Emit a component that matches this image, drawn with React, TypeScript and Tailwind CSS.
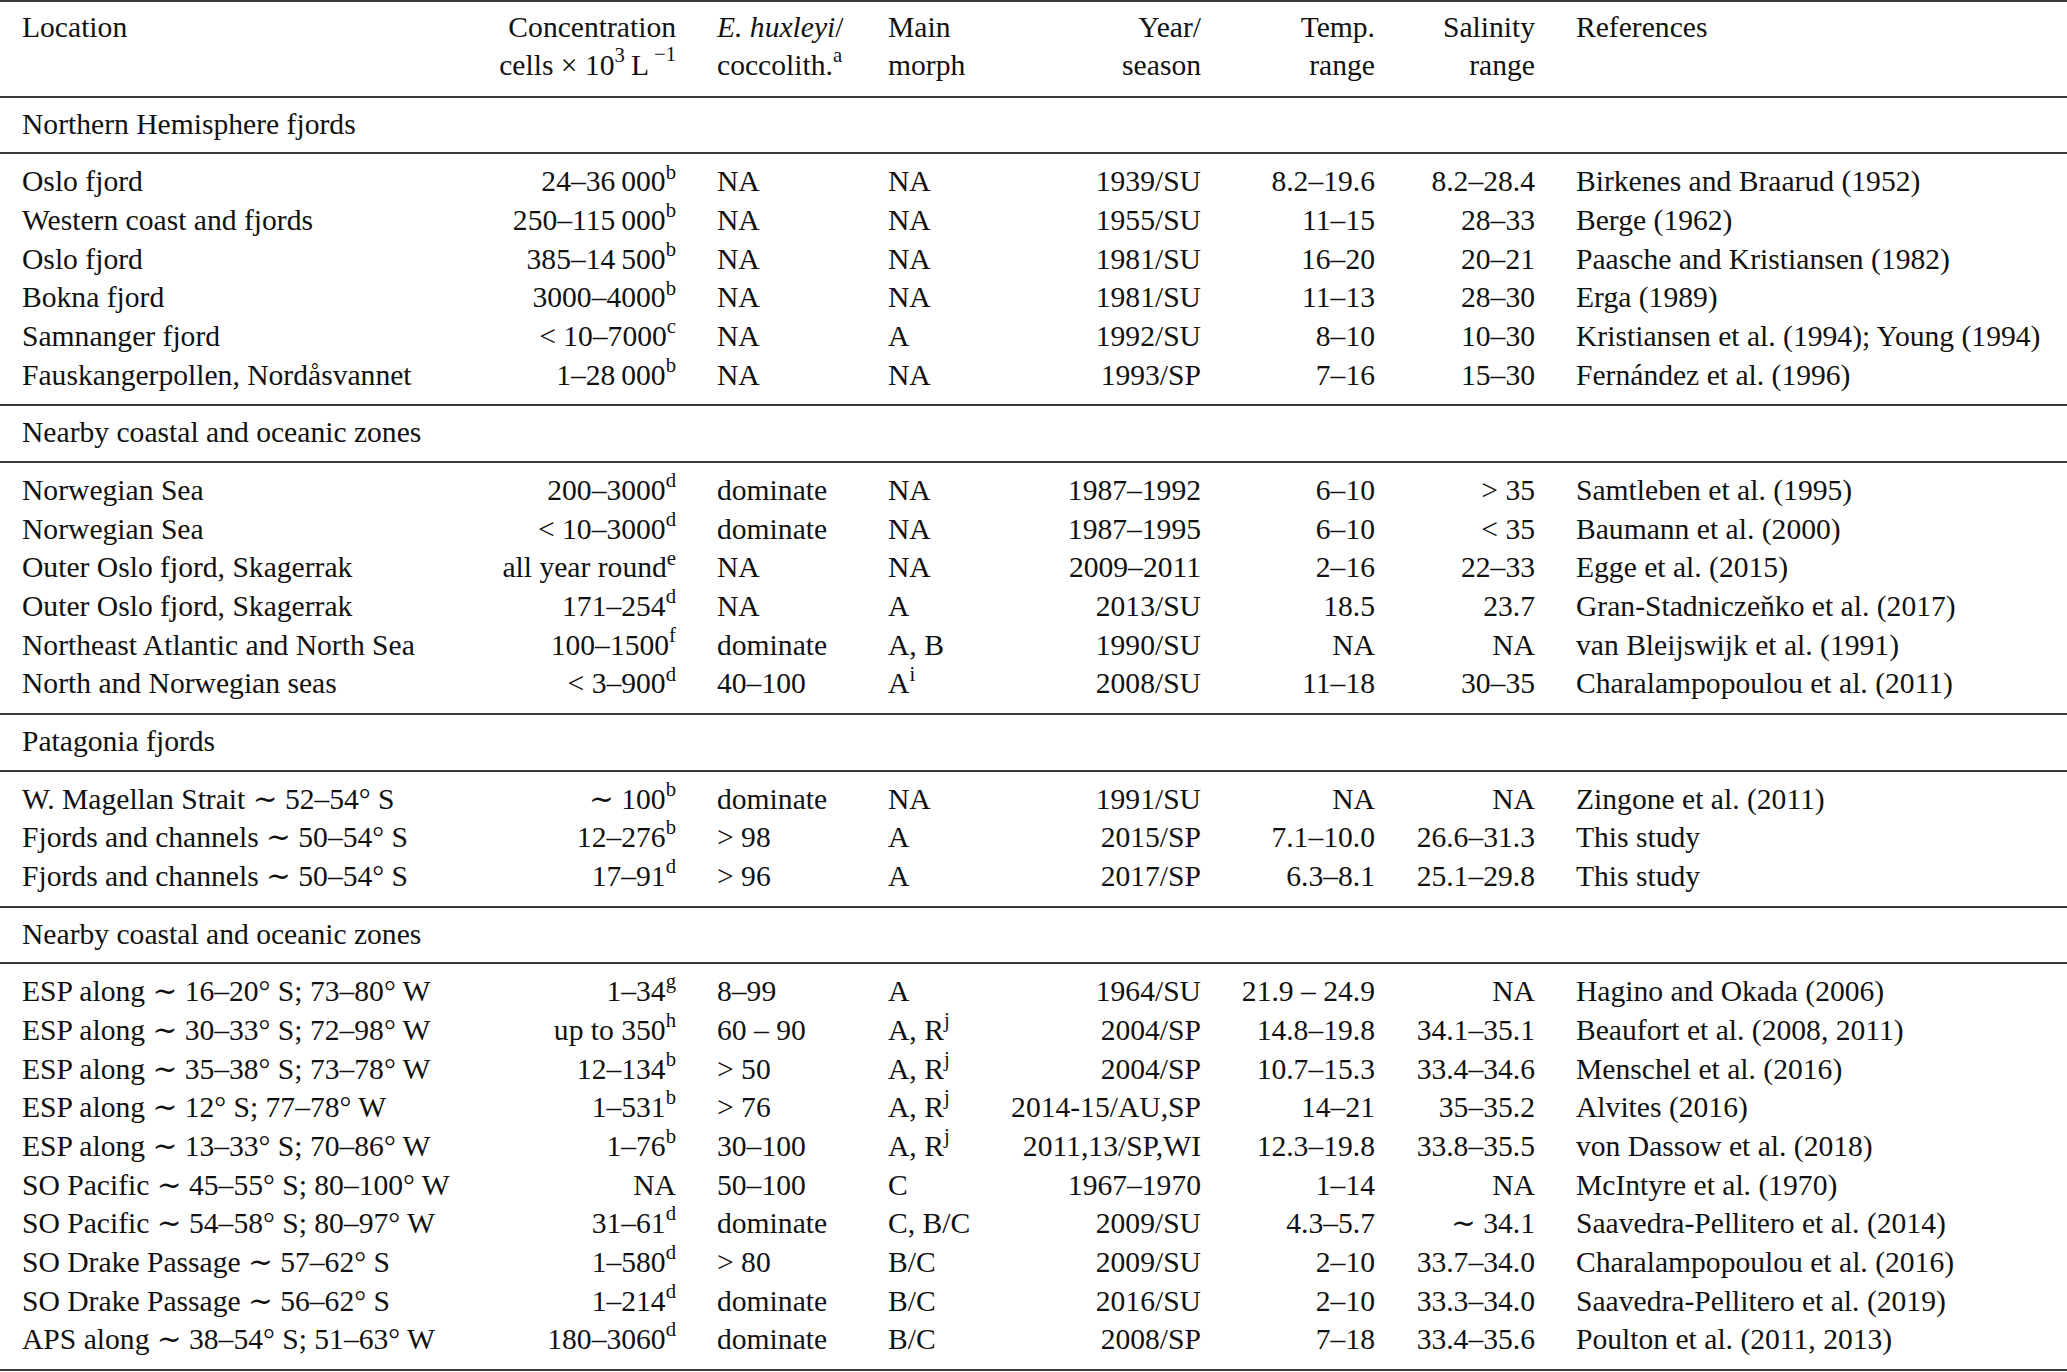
const ts = "\u2009";

type Row = string[];

const sections: { title: string; rows: Row[] }[] = [
  {
    title: "Northern Hemisphere fjords",
    rows: [
      ["Oslo fjord", `24–36${ts}000^b`, "NA", "NA", "1939/SU", "8.2–19.6", "8.2–28.4", "Birkenes and Braarud (1952)"],
      ["Western coast and fjords", `250–115${ts}000^b`, "NA", "NA", "1955/SU", "11–15", "28–33", "Berge (1962)"],
      ["Oslo fjord", `385–14${ts}500^b`, "NA", "NA", "1981/SU", "16–20", "20–21", "Paasche and Kristiansen (1982)"],
      ["Bokna fjord", "3000–4000^b", "NA", "NA", "1981/SU", "11–13", "28–30", "Erga (1989)"],
      ["Samnanger fjord", "< 10–7000^c", "NA", "A", "1992/SU", "8–10", "10–30", "Kristiansen et al. (1994); Young (1994)"],
      ["Fauskangerpollen, Nordåsvannet", `1–28${ts}000^b`, "NA", "NA", "1993/SP", "7–16", "15–30", "Fernández et al. (1996)"],
    ],
  },
  {
    title: "Nearby coastal and oceanic zones",
    rows: [
      ["Norwegian Sea", "200–3000^d", "dominate", "NA", "1987–1992", "6–10", "> 35", "Samtleben et al. (1995)"],
      ["Norwegian Sea", "< 10–3000^d", "dominate", "NA", "1987–1995", "6–10", "< 35", "Baumann et al. (2000)"],
      ["Outer Oslo fjord, Skagerrak", "all year round^e", "NA", "NA", "2009–2011", "2–16", "22–33", "Egge et al. (2015)"],
      ["Outer Oslo fjord, Skagerrak", "171–254^d", "NA", "A", "2013/SU", "18.5", "23.7", "Gran-Stadniczeňko et al. (2017)"],
      ["Northeast Atlantic and North Sea", "100–1500^f", "dominate", "A, B", "1990/SU", "NA", "NA", "van Bleijswijk et al. (1991)"],
      ["North and Norwegian seas", "< 3–900^d", "40–100", "A^i", "2008/SU", "11–18", "30–35", "Charalampopoulou et al. (2011)"],
    ],
  },
  {
    title: "Patagonia fjords",
    rows: [
      ["W. Magellan Strait ∼ 52–54° S", "∼ 100^b", "dominate", "NA", "1991/SU", "NA", "NA", "Zingone et al. (2011)"],
      ["Fjords and channels ∼ 50–54° S", "12–276^b", "> 98", "A", "2015/SP", "7.1–10.0", "26.6–31.3", "This study"],
      ["Fjords and channels ∼ 50–54° S", "17–91^d", "> 96", "A", "2017/SP", "6.3–8.1", "25.1–29.8", "This study"],
    ],
  },
  {
    title: "Nearby coastal and oceanic zones",
    rows: [
      ["ESP along ∼ 16–20° S; 73–80° W", "1–34^g", "8–99", "A", "1964/SU", "21.9 – 24.9", "NA", "Hagino and Okada (2006)"],
      ["ESP along ∼ 30–33° S; 72–98° W", "up to 350^h", "60 – 90", "A, R^j", "2004/SP", "14.8–19.8", "34.1–35.1", "Beaufort et al. (2008, 2011)"],
      ["ESP along ∼ 35–38° S; 73–78° W", "12–134^b", "> 50", "A, R^j", "2004/SP", "10.7–15.3", "33.4–34.6", "Menschel et al. (2016)"],
      ["ESP along ∼ 12° S; 77–78° W", "1–531^b", "> 76", "A, R^j", "2014-15/AU,SP", "14–21", "35–35.2", "Alvites (2016)"],
      ["ESP along ∼ 13–33° S; 70–86° W", "1–76^b", "30–100", "A, R^j", "2011,13/SP,WI", "12.3–19.8", "33.8–35.5", "von Dassow et al. (2018)"],
      ["SO Pacific ∼ 45–55° S; 80–100° W", "NA", "50–100", "C", "1967–1970", "1–14", "NA", "McIntyre et al. (1970)"],
      ["SO Pacific ∼ 54–58° S; 80–97° W", "31–61^d", "dominate", "C, B/C", "2009/SU", "4.3–5.7", "∼ 34.1", "Saavedra-Pellitero et al. (2014)"],
      ["SO Drake Passage ∼ 57–62° S", "1–580^d", "> 80", "B/C", "2009/SU", "2–10", "33.7–34.0", "Charalampopoulou et al. (2016)"],
      ["SO Drake Passage ∼ 56–62° S", "1–214^d", "dominate", "B/C", "2016/SU", "2–10", "33.3–34.0", "Saavedra-Pellitero et al. (2019)"],
      ["APS along ∼ 38–54° S; 51–63° W", "180–3060^d", "dominate", "B/C", "2008/SP", "7–18", "33.4–35.6", "Poulton et al. (2011, 2013)"],
    ],
  },
];

// column classes: alignment + padding
const cols = [
  "pl-[22px] text-left",
  "text-right",
  "pl-[41px] text-left",
  "text-left",
  "text-right",
  "text-right",
  "text-right",
  "pl-[41px] text-left",
];

const grid = "grid grid-cols-[482px_194px_212px_117px_196px_174px_160px_1fr]";

function Txt({ v }: { v: string }) {
  const [main, sup] = v.split("^");
  return (
    <>
      {main}
      {sup && <sup className="text-[0.7em] top-[-0.62em]">{sup}</sup>}
    </>
  );
}

function Rule() {
  return <div className="h-[2px] bg-[#3a3a3a]" />;
}

export default function App() {
  return (
    <div
      className="w-[2067px] bg-white text-[#111] text-[29.6px] leading-[38.65px] whitespace-nowrap"
      style={{ fontFamily: '"Liberation Serif", "DejaVu Serif", serif' }}
    >
      <Rule />
      <div className={`${grid} pt-[5.5px] pb-[11px]`}>
        <div className={cols[0]}>Location</div>
        <div className={cols[1]}>
          Concentration
          <br />
          cells × 10<sup className="text-[0.7em] top-[-0.62em] mr-[6px]">3</sup>L
          <sup className="text-[0.7em] top-[-0.7em] ml-[5px]">−1</sup>
        </div>
        <div className={cols[2]}>
          <i>E. huxleyi</i>/
          <br />
          coccolith.<sup className="text-[0.7em] top-[-0.62em]">a</sup>
        </div>
        <div className={cols[3]}>
          Main
          <br />
          morph
        </div>
        <div className={cols[4]}>
          Year/
          <br />
          season
        </div>
        <div className={cols[5]}>
          Temp.
          <br />
          range
        </div>
        <div className={cols[6]}>
          Salinity
          <br />
          range
        </div>
        <div className={cols[7]}>References</div>
      </div>
      {sections.map((s, si) => (
        <div key={si}>
          <Rule />
          <div className="pl-[22px] pt-[7px] pb-[9px]">{s.title}</div>
          <Rule />
          <div className="pt-[8px] pb-[10px]">
            {s.rows.map((r, ri) => (
              <div key={ri} className={grid}>
                {r.map((c, ci) => (
                  <div key={ci} className={cols[ci]}>
                    <Txt v={c} />
                  </div>
                ))}
              </div>
            ))}
          </div>
        </div>
      ))}
      <Rule />
    </div>
  );
}
